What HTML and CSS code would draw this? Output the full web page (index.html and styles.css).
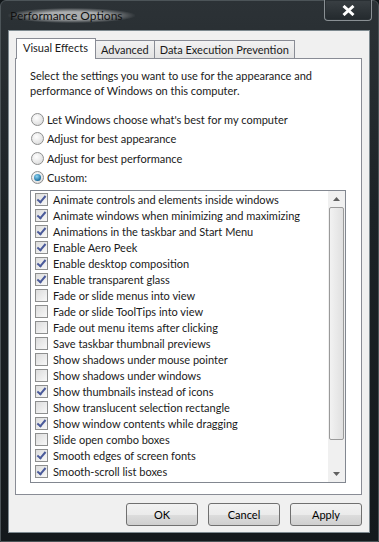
FILE: index.html
```html
<!DOCTYPE html>
<html lang="en">
<head>
    <meta charset="UTF-8">
    <title>Performance Options</title>
    <link rel="stylesheet" href="styles.css">
</head>
<body>
    <div class="window">
        <!-- title bar -->
        <div class="titlebar">
            <span class="title">Performance Options</span>
            <button class="close">
                <svg width="13" height="11" viewBox="0 0 13 11"><path d="M1.5 1 L11.5 10 M11.5 1 L1.5 10" stroke="#fff" stroke-width="3"/></svg>
            </button>
        </div>

        <div class="client">
            <!-- tabs -->
            <div class="tabs">
                <div class="tab active">Visual Effects</div>
                <div class="tab">Advanced</div>
                <div class="tab">Data Execution Prevention</div>
            </div>

            <div class="panel">
                <p class="intro">Select the settings you want to use for the appearance and<br>performance of Windows on this computer.</p>

                <div class="radios">
                    <label class="radio"><span class="dot"></span>Let Windows choose what's best for my computer</label>
                    <label class="radio"><span class="dot"></span>Adjust for best appearance</label>
                    <label class="radio"><span class="dot"></span>Adjust for best performance</label>
                    <label class="radio"><span class="dot on"></span>Custom:</label>
                </div>

                <div class="listbox">
                    <ul class="items">
                        <li><span class="box on"></span>Animate controls and elements inside windows</li>
                        <li><span class="box on"></span>Animate windows when minimizing and maximizing</li>
                        <li><span class="box on"></span>Animations in the taskbar and Start Menu</li>
                        <li><span class="box on"></span>Enable Aero Peek</li>
                        <li><span class="box on"></span>Enable desktop composition</li>
                        <li><span class="box on"></span>Enable transparent glass</li>
                        <li><span class="box"></span>Fade or slide menus into view</li>
                        <li><span class="box"></span>Fade or slide ToolTips into view</li>
                        <li><span class="box"></span>Fade out menu items after clicking</li>
                        <li><span class="box"></span>Save taskbar thumbnail previews</li>
                        <li><span class="box"></span>Show shadows under mouse pointer</li>
                        <li><span class="box"></span>Show shadows under windows</li>
                        <li><span class="box on"></span>Show thumbnails instead of icons</li>
                        <li><span class="box"></span>Show translucent selection rectangle</li>
                        <li><span class="box on"></span>Show window contents while dragging</li>
                        <li><span class="box"></span>Slide open combo boxes</li>
                        <li><span class="box on"></span>Smooth edges of screen fonts</li>
                        <li><span class="box on"></span>Smooth-scroll list boxes</li>
                    </ul>
                    <div class="scrollbar">
                        <div class="arrow">
                            <svg width="7" height="4" viewBox="0 0 7 4"><path d="M0 4 L3.5 0 L7 4 Z" fill="#606060"/></svg>
                        </div>
                        <div class="track"><div class="thumb"></div></div>
                        <div class="arrow">
                            <svg width="7" height="4" viewBox="0 0 7 4"><path d="M0 0 L3.5 4 L7 0 Z" fill="#606060"/></svg>
                        </div>
                    </div>
                </div>
            </div>

            <!-- buttons -->
            <div class="buttons">
                <button class="btn">OK</button>
                <button class="btn">Cancel</button>
                <button class="btn">Apply</button>
            </div>
        </div>
    </div>
</body>
</html>
```

FILE: styles.css
```css
body {
    margin: 0;
    background-color: #101518;
    font-family: 'Lato', 'Noto Sans', sans-serif;
    font-size: 11px;
    color: #1a1a1a;
}
.window {
    width: 379px;
    height: 542px;
    box-sizing: border-box;
    border: 1px solid #4c5458;
    border-radius: 6px 6px 0 0;
    background: linear-gradient(180deg, #2c3236 0%, #1c2226 40%, #14191c 100%);
    display: flex;
    flex-direction: column;
}
.titlebar {
    height: 29px;
    display: flex;
    justify-content: space-between;
    align-items: flex-start;
}
.title {
    margin: 7px 0 0 7px;
    font-size: 12px;
    color: #111;
    background: radial-gradient(ellipse at center, rgba(255,255,255,0.6) 35%, rgba(255,255,255,0) 72%);
    padding: 0 12px 0 2px;
}
.close {
    width: 48px;
    height: 21px;
    margin: -1px 6px 0 0;
    border: 1px solid #8a9094;
    border-top: none;
    border-radius: 0 0 4px 4px;
    box-shadow: inset 0 0 0 1px #2a3034;
    background: linear-gradient(180deg, #3a4044, #23292d);
    display: flex;
    align-items: center;
    justify-content: center;
    padding: 0;
}
.client {
    margin: 0 8px 8px 7px;
    flex: 1;
    background-color: #f0f0f0;
    border: 1px solid #7e8a90;
    padding: 7px 7px 0 6px;
    display: flex;
    flex-direction: column;
}
.tabs {
    display: flex;
    align-items: flex-end;
    height: 20px;
    margin-left: 1px;
    position: relative;
    z-index: 1;
}
.tab {
    height: 18px;
    line-height: 18px;
    padding: 0 5px;
    border: 1px solid #898c95;
    border-bottom: none;
    border-left: none;
    background: linear-gradient(180deg, #f2f2f2, #e3e3e3);
    box-sizing: border-box;
    white-space: nowrap;
}
.tab.active {
    height: 21px;
    margin-bottom: -1px;
    border-left: 1px solid #898c95;
    background: #fff;
    padding: 0 7px 0 6px;
    line-height: 18px;
}
.panel {
    height: 437px;
    box-sizing: border-box;
    border: 1px solid #898c95;
    background: #fff;
    padding: 10px 20px 0 14px;
}
.intro {
    margin: 0;
    line-height: 14.5px;
}
.radios {
    margin-top: 13px;
    display: flex;
    flex-direction: column;
    gap: 3.5px;
}
.radio {
    display: flex;
    align-items: center;
    height: 16px;
    white-space: nowrap;
}
.dot {
    width: 11px;
    height: 11px;
    border-radius: 50%;
    border: 1px solid #8e8f8f;
    background: radial-gradient(circle at 40% 35%, #fff, #d4d4d4);
    margin: 0 3px 0 1px;
    position: relative;
    flex: none;
}
.dot.on::after {
    content: "";
    position: absolute;
    left: 2px;
    top: 2px;
    width: 7px;
    height: 7px;
    border-radius: 50%;
    background: radial-gradient(circle at 40% 35%, #8fd6f4, #1c6fa0 70%, #0d3f61);
}
.listbox {
    margin-top: 4px;
    margin-right: -5px;
    height: 293px;
    box-sizing: border-box;
    border: 1px solid #828790;
    display: flex;
}
.items {
    list-style: none;
    margin: 0;
    padding: 1px 0 0 4px;
    flex: 1;
}
.items li {
    height: 16px;
    display: flex;
    align-items: center;
    white-space: nowrap;
}
.box {
    width: 11px;
    height: 11px;
    border: 1px solid #8e8f8f;
    background: linear-gradient(135deg, #dcdcdc, #f8f8f8);
    margin-right: 5px;
    position: relative;
    flex: none;
}
.box.on::after {
    content: "";
    position: absolute;
    left: 3px;
    top: 0px;
    width: 3px;
    height: 7px;
    border: solid #4a5a9a;
    border-width: 0 2px 2px 0;
    transform: rotate(40deg);
}
.scrollbar {
    width: 17px;
    display: flex;
    flex-direction: column;
    background: #f0f0f0;
    flex: none;
}
.arrow {
    height: 16px;
    display: flex;
    align-items: center;
    justify-content: center;
}
.track {
    flex: 1;
    padding: 0 1px;
}
.thumb {
    height: 233px;
    box-sizing: border-box;
    border: 1px solid #9a9a9a;
    border-radius: 2px;
    background: linear-gradient(90deg, #f2f2f2, #e0e0e0);
}
.buttons {
    display: flex;
    justify-content: flex-end;
    gap: 10px;
    margin-top: 8px;
}
.btn {
    width: 72px;
    height: 23px;
    border: 1px solid #707070;
    border-radius: 3px;
    background: linear-gradient(180deg, #f2f2f2 0%, #ebebeb 50%, #dddddd 51%, #cfcfcf 100%);
    font-family: 'Lato', 'Noto Sans', sans-serif;
    font-size: 11px;
    color: #000;
    padding: 0;
}
```
